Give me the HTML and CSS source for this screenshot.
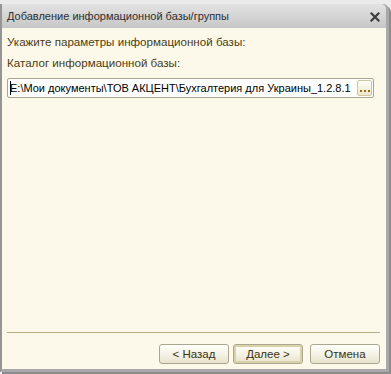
FILE: index.html
```html
<!DOCTYPE html>
<html lang="ru">
<head>
    <meta charset="UTF-8">
    <title>Добавление информационной базы/группы</title>
    <link rel="stylesheet" href="styles.css">
</head>
<body>
    <div class="window">
        <!-- Title bar -->
        <div class="titlebar">
            <span class="title">Добавление информационной базы/группы</span>
            <svg class="close" width="10" height="10" viewBox="0 0 10 10">
                <path d="M1.5 1.5 L8.5 8.5 M8.5 1.5 L1.5 8.5" stroke="#3c3c3c" stroke-width="2.2" stroke-linecap="square"/>
            </svg>
        </div>

        <!-- Dialog content -->
        <div class="content">
            <div class="label">Укажите параметры информационной базы:</div>
            <div class="label">Каталог информационной базы:</div>
            <div class="path-field">
                <div class="path-text"><span class="caret"></span>E:\Мои документы\ТОВ АКЦЕНТ\Бухгалтерия для Украины_1.2.8.1</div>
                <button class="browse"><i></i><i></i><i></i></button>
            </div>

            <div class="spacer"></div>

            <div class="separator"></div>
            <div class="buttons">
                <button class="btn">&lt; Назад</button>
                <button class="btn default">Далее &gt;</button>
                <button class="btn cancel">Отмена</button>
            </div>
        </div>
    </div>
</body>
</html>
```

FILE: styles.css
```css
body {
    margin: 0;
    width: 391px;
    height: 374px;
    overflow: hidden;
    background: #ebebeb;
    font-family: "Liberation Sans", Arial, sans-serif;
    font-size: 11px;
}

.window {
    box-sizing: border-box;
    margin-top: 4px;
    width: 389px;
    height: 368px;
    display: flex;
    flex-direction: column;
    border-left: 2px solid #959595;
    border-right: 3px solid #a9a9a9;
    border-bottom: 3px solid #a9a9a9;
    border-top-right-radius: 6px;
    box-shadow: 2px 2px 0 #8c8c8c;
    background: #a9a9a9;
}

.titlebar {
    height: 24px;
    display: flex;
    align-items: center;
    justify-content: space-between;
    padding: 0 6px 0 5px;
    background: linear-gradient(to bottom, #e2e2e2, #d2d2d2 60%, #c6c6c6);
    border-top-right-radius: 5px;
    color: #2e2e2e;
    font-size: 11px;
}

.close {
    margin-top: 1px;
}

.content {
    flex: 1;
    display: flex;
    flex-direction: column;
    background: #fcf9ea;
    padding: 0 6px 5px 5px;
    color: #4b3c12;
}

.label {
    line-height: 14px;
    margin-top: 7px;
    font-size: 11.6px;
}

.path-field {
    margin-top: 8px;
    margin-right: 6px;
    height: 20px;
    box-sizing: border-box;
    display: flex;
    align-items: center;
    background: #ffffff;
    border: 1px solid #aaa48c;
    border-radius: 2px;
    padding-right: 1px;
}

.path-text {
    flex: 1;
    white-space: nowrap;
    overflow: hidden;
    color: #000000;
    padding-left: 2px;
    line-height: 16px;
    font-size: 11px;
}

.caret {
    display: inline-block;
    width: 1px;
    height: 14px;
    background: #000000;
    vertical-align: -3px;
    margin-right: -1px;
}

.browse {
    width: 15px;
    height: 16px;
    padding: 0 0 3px 0;
    border: 1px solid #cdc6a4;
    border-radius: 2px;
    background: linear-gradient(to bottom, #fffef6, #ece7cf);
    display: flex;
    align-items: flex-end;
    justify-content: center;
    gap: 2px;
}

.browse i {
    width: 2px;
    height: 2px;
    background: #9a6a08;
}

.spacer {
    flex: 1;
}

.separator {
    height: 1px;
    background: #b6ae85;
}

.buttons {
    margin-top: 11px;
    display: flex;
    justify-content: flex-end;
    gap: 4px;
}

.btn {
    width: 70px;
    height: 20px;
    padding: 0;
    border: 1px solid #aba68f;
    border-radius: 3px;
    background: linear-gradient(to bottom, #fffffb, #f3f0e2 60%, #e7e2cc);
    color: #3a3213;
    font-family: "Liberation Sans", Arial, sans-serif;
    font-size: 11.5px;
}

.btn.default {
    box-shadow: inset 0 0 0 2px #d9d1a9;
}

.btn.cancel {
    margin-left: 3px;
}
```
